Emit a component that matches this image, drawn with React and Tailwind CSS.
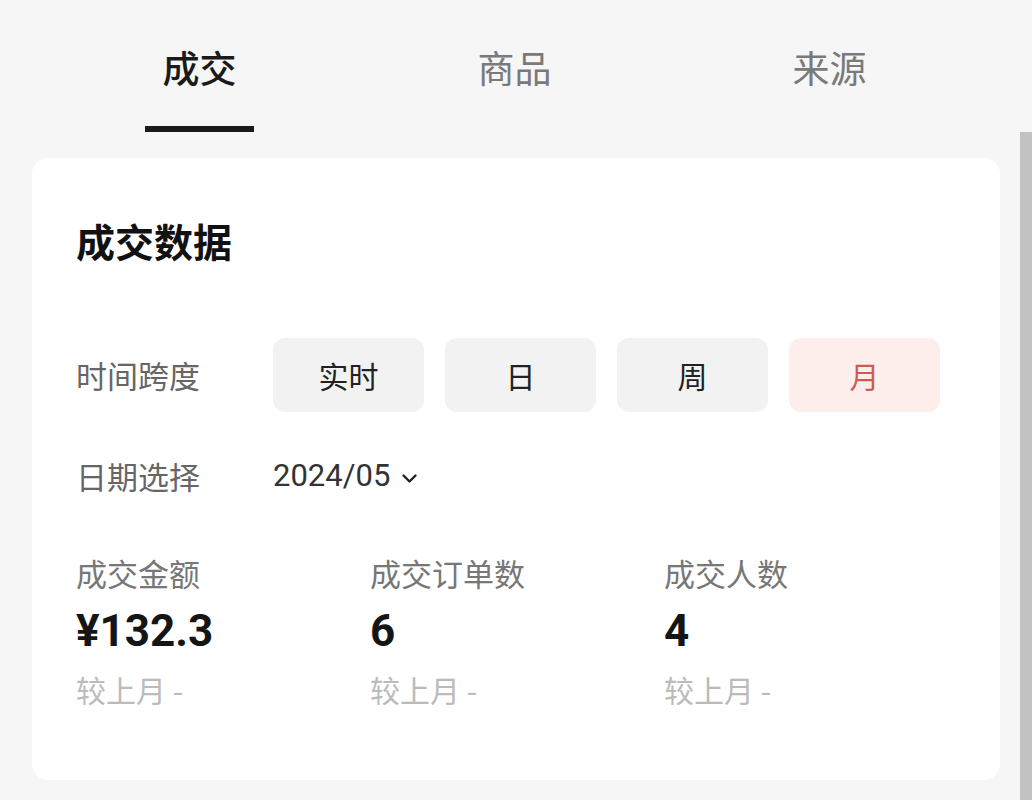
import React, { useState } from 'react';

const tabs = ['成交', '商品', '来源'];
const spans = ['实时', '日', '周', '月'];
const stats = [
  { label: '成交金额', value: '¥132.3' },
  { label: '成交订单数', value: '6' },
  { label: '成交人数', value: '4' },
];

const ChevronDown = () => (
  <svg width="17" height="11" viewBox="0 0 17 11" fill="none" className="ml-[11px] mt-[5px]">
    <path d="M2.5 2.5l6 6 6-6" stroke="#222" strokeWidth="2.4" strokeLinecap="round" strokeLinejoin="round" />
  </svg>
);

const App = () => {
  const [activeTab, setActiveTab] = useState(0);
  const [span, setSpan] = useState(3);

  return (
    <div
      className="relative w-[1032px] h-[800px] overflow-hidden bg-[#f6f6f6]"
      style={{ fontFamily: '"Noto Sans CJK SC", "Noto Sans", sans-serif' }}
    >
      {/* Tabs */}
      <div className="flex w-[987px] pl-[42px] pt-[44px]">
        {tabs.map((t, i) => (
          <button
            key={t}
            onClick={() => setActiveTab(i)}
            className="flex-1 flex flex-col items-center"
          >
            <span
              className={
                'text-[37px] leading-[46px] ' +
                (i === activeTab ? 'text-[#1a1a1a] font-medium' : 'text-[#7a7a7a]')
              }
            >
              {t}
            </span>
            <span
              className={
                'mt-[36px] h-[6px] w-[109px] ' + (i === activeTab ? 'bg-[#1a1a1a]' : 'bg-transparent')
              }
            />
          </button>
        ))}
      </div>

      {/* Card */}
      <div className="ml-[32px] mt-[26px] w-[968px] rounded-[16px] bg-white pl-[44px] pt-[58px] pb-[71px]">
        <h2 className="text-[39px] leading-[48px] font-bold text-[#111]">成交数据</h2>

        {/* Time span */}
        <div className="mt-[74px] flex items-center">
          <div className="w-[197px] text-[31px] leading-[40px] text-[#666]">时间跨度</div>
          <div className="flex gap-[21px]">
            {spans.map((s, i) => (
              <button
                key={s}
                onClick={() => setSpan(i)}
                className={
                  'w-[151px] h-[74px] rounded-[12px] text-[30px] leading-[40px] flex items-center justify-center ' +
                  (i === span ? 'bg-[#fdeeeb] text-[#cc5b55]' : 'bg-[#f2f2f2] text-[#222]')
                }
              >
                {s}
              </button>
            ))}
          </div>
        </div>

        {/* Date */}
        <div className="mt-[42px] flex items-center h-[44px]">
          <div className="w-[197px] text-[31px] leading-[40px] text-[#666]">日期选择</div>
          <div className="flex items-center">
            <span
              className="text-[31px] leading-[40px] text-[#333]"
              style={{ fontFamily: 'Roboto, "Noto Sans CJK SC", sans-serif' }}
            >
              2024/05
            </span>
            <ChevronDown />
          </div>
        </div>

        {/* Stats */}
        <div className="mt-[55px] grid grid-cols-[294px_294px_294px]">
          {stats.map(s => (
            <div key={s.label} className="flex flex-col">
              <span className="text-[31px] leading-[40px] text-[#777]">{s.label}</span>
              <span
                className="mt-[14px] text-[44px] leading-[48px] font-bold text-[#151515]"
                style={{ fontFamily: 'Roboto, "Noto Sans CJK SC", sans-serif' }}
              >
                {s.value}
              </span>
              <span className="mt-[14px] text-[30px] leading-[40px] text-[#bbbbbb]">较上月 -</span>
            </div>
          ))}
        </div>
      </div>

      {/* overlay scrollbar */}
      <div className="absolute right-0 top-[132px] w-[12px] h-[668px] bg-[#c2c2c2]" />
    </div>
  );
};

export default App;
